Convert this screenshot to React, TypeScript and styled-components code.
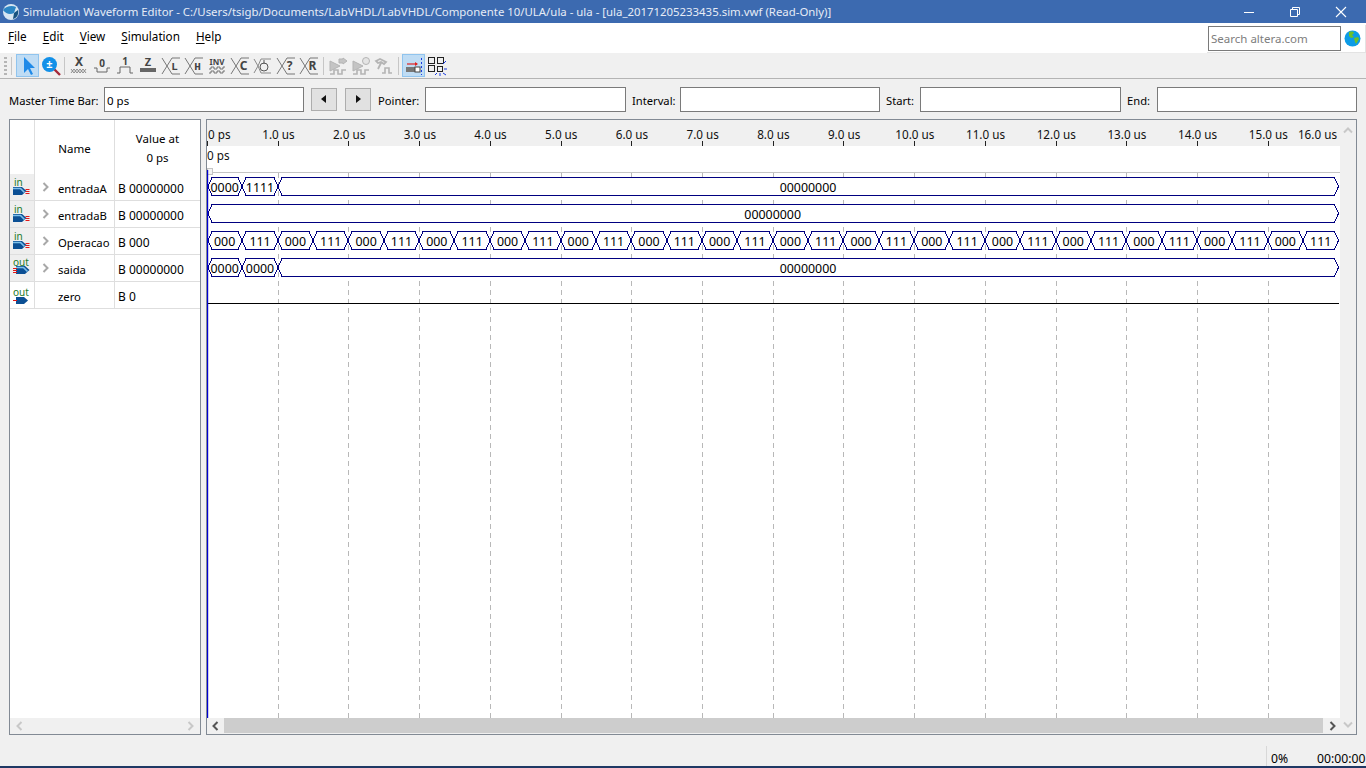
import React from "react";
import styled, { createGlobalStyle } from "styled-components";

const FONT = `"Noto Sans", "Open Sans", sans-serif`;
const NAVY = "#000080";

const GlobalStyle = createGlobalStyle`
  html, body {
    margin: 0;
    padding: 0;
    background: #f0f0f0;
    overflow: hidden;
  }
  body {
    font-family: ${FONT};
    font-size: 11.5px;
    color: #000;
  }
  * { box-sizing: border-box; }
`;

const Page = styled.div`
  width: 1366px;
  height: 768px;
  display: flex;
  flex-direction: column;
`;

/* title bar */
const TitleBar = styled.div`
  height: 23px;
  flex: none;
  background: #3c6ab0;
  display: flex;
  align-items: center;
  padding: 0 2px;
`;
const TitleText = styled.div`
  margin-left: 3px;
  color: #e6ecf6;
  font-size: 11.4px;
  flex: 1;
  white-space: nowrap;
`;
const WindowBtn = styled.div`
  width: 46px;
  height: 23px;
  display: flex;
  align-items: center;
  justify-content: center;
`;

/* menu */
const MenuBar = styled.div`
  height: 30px;
  flex: none;
  background: #fff;
  display: flex;
  align-items: center;
  padding-left: 8px;
  gap: 16px;
`;
const MenuItem = styled.span`
  font-size: 11.7px;
  margin-top: -5px;
  u { text-underline-offset: 2px; }
`;
const SearchArea = styled.div`
  margin-left: auto;
  height: 28px;
  width: 159px;
  margin-top: 2px;
  display: flex;
  align-items: center;
  gap: 3px;
  border-right: 1px solid #e3e3e3;
  border-bottom: 1px solid #e3e3e3;
  padding-left: 1px;
`;
const SearchBox = styled.div`
  width: 133px;
  height: 25px;
  border: 1px solid #7a7a7a;
  background: #fff;
  color: #7d7d7d;
  padding-left: 2px;
  line-height: 23px;
  font-size: 11.5px;
`;

/* toolbar */
const ToolBar = styled.div`
  height: 26px;
  flex: none;
  background: #f0f0f0;
  border-bottom: 1px solid #b4b4b4;
  display: flex;
  align-items: center;
  padding-left: 4px;
`;
const Grip = styled.div`
  width: 3px;
  height: 18px;
  background: repeating-linear-gradient(to bottom, #b5b5b5 0 2px, transparent 2px 4px);
`;
const ToolSep = styled.div<{ $gap?: number }>`
  width: 1px;
  height: 18px;
  flex: none;
  background: #c6c6c6;
  margin: 0 ${(p) => p.$gap ?? 2}px;
`;
const ToolBtn = styled.div<{ $active?: boolean }>`
  width: 23px;
  height: 23px;
  flex: none;
  display: flex;
  align-items: center;
  justify-content: center;
  background: ${(p) => (p.$active ? "#bfdcf4" : "transparent")};
  border: 1px solid ${(p) => (p.$active ? "#90c4ee" : "transparent")};
`;

/* time bar */
const TimeBar = styled.div`
  height: 40px;
  flex: none;
  display: flex;
  align-items: center;
  padding: 0 9px 0 9px;
  gap: 6px;
`;
const TimeLabel = styled.span<{ $w: number }>`
  width: ${(p) => p.$w}px;
  flex: none;
  white-space: nowrap;
  font-size: 11.2px;
  margin-top: 2px;
`;
const TimeInput = styled.div<{ $w: number }>`
  width: ${(p) => p.$w}px;
  height: 25px;
  flex: none;
  background: #fff;
  border: 1px solid #7a7a7a;
  padding-left: 2px;
  line-height: 25px;
  font-size: 11.5px;
`;
const StepBtn = styled.div<{ $left: number; $right?: number }>`
  width: 26px;
  height: 23px;
  flex: none;
  margin: 0 ${(p) => p.$right ?? 0}px 0 ${(p) => p.$left}px;
  background: #e1e1e1;
  border: 1px solid #adadad;
  display: flex;
  align-items: center;
  justify-content: center;
`;

/* panels */
const Main = styled.div`
  height: 616px;
  flex: none;
  display: grid;
  grid-template-columns: 192px 1151px;
  column-gap: 5px;
  padding-left: 9px;
`;
const Panel = styled.div`
  border: 1px solid #828a94;
  background: #fff;
  min-height: 0;
  display: flex;
  overflow: hidden;
`;
const NodeColumn = styled.div`
  flex: 1;
  display: flex;
  flex-direction: column;
`;
const HeaderRow = styled.div`
  height: 54px;
  flex: none;
  display: grid;
  grid-template-columns: 25px 80px 1fr;
`;
const HeaderCell = styled.div<{ $line?: boolean }>`
  border-right: ${(p) => (p.$line ? "1px solid #dedede" : "none")};
  display: flex;
  align-items: center;
  justify-content: center;
  flex-direction: column;
  line-height: 19px;
  padding-top: 2px;
  font-size: 11.5px;
`;
const NodeRow = styled.div`
  height: 27px;
  flex: none;
  display: grid;
  grid-template-columns: 25px 80px 1fr;
  border-bottom: 1px solid #dedede;
`;
const IconCell = styled.div<{ $shade: boolean }>`
  background: ${(p) => (p.$shade ? "#eeeeee" : "#fff")};
  border-right: 1px solid #dedede;
`;
const NameCell = styled.div`
  border-right: 1px solid #dedede;
  display: flex;
  align-items: center;
  padding-top: 2px;
  font-size: 11.3px;
`;
const Chevron = styled.div`
  width: 23px;
  flex: none;
  display: flex;
  justify-content: center;
  padding-right: 3px;
  margin-top: -3px;
`;
const ValueCell = styled.div`
  display: flex;
  align-items: center;
  padding: 2px 0 0 3px;
  font-size: 12px;
  white-space: nowrap;
`;
const Filler = styled.div`
  flex: 1;
`;
const HScroll = styled.div`
  height: 16px;
  flex: none;
  background: #f0f0f0;
  display: flex;
  align-items: center;
  justify-content: space-between;
  padding: 0 5px;
`;
const WaveColumn = styled.div`
  width: 1133px;
  flex: none;
  display: flex;
  flex-direction: column;
`;
const WaveChart = styled.svg`
  display: block;
  flex: none;
  font-family: ${FONT};
  font-size: 11.7px;
`;
const WaveLabel = styled.text`
  font-size: 12.4px;
  fill: #000;
`;
const WaveScroll = styled.div`
  height: 16px;
  flex: none;
  background: #f0f0f0;
  display: flex;
  align-items: center;
`;
const ArrowSlot = styled.div`
  width: 17px;
  flex: none;
  display: flex;
  justify-content: center;
`;
const Thumb = styled.div`
  flex: 1;
  height: 15px;
  margin-top: -1px;
  background: #cdcdcd;
`;
const VScroll = styled.div`
  flex: 1;
  background: #f0f0f0;
  display: flex;
  flex-direction: column;
  align-items: center;
  justify-content: space-between;
  padding: 6px 0 5px;
`;

/* status */
const StatusBar = styled.div`
  flex: 1;
  display: flex;
  align-items: flex-end;
  justify-content: flex-end;
`;
const StatusCell = styled.div<{ $w: number; $line?: boolean }>`
  width: ${(p) => p.$w}px;
  height: 20px;
  border-left: ${(p) => (p.$line ? "1px solid #d8d8d8" : "none")};
  padding: 4px 0 0 ${(p) => (p.$line ? 4 : 0)}px;
  font-size: 12.2px;
  white-space: nowrap;
`;
const BottomStrip = styled.div`
  height: 2px;
  flex: none;
  background: #1f3864;
`;

/* toolbar icons */
const D = "#b4b4b4";

const Svg: React.FC<{ children: React.ReactNode }> = ({ children }) => (
  <svg width={20} height={20} viewBox="0 0 20 20" style={{ display: "block", overflow: "visible" }}>
    {children}
  </svg>
);

const Letter: React.FC<{ x: number; y: number; s?: number; c?: string; mono?: boolean; children: React.ReactNode }> = ({
  x,
  y,
  s = 10,
  c = "#444",
  mono,
  children,
}) => (
  <text
    x={x}
    y={y}
    textAnchor="middle"
    fontSize={s}
    fontWeight={700}
    fontFamily={mono ? `"Liberation Mono", monospace` : FONT}
    fill={c}
  >
    {children}
  </text>
);

const BusLetter: React.FC<{ l: string; mono?: boolean }> = ({ l, mono }) => (
  <Svg>
    <path d="M1 2l5 8-5 8M6 10l5-8h8M6 10l5 8h8" fill="none" stroke="#777" strokeWidth={1} />
    <Letter x={13.5} y={14} s={mono ? 11 : 12} mono={mono}>
      {l}
    </Letter>
  </Svg>
);

const RunWave: React.FC<{ mark: React.ReactNode }> = ({ mark }) => (
  <Svg>
    <path d="M2 5l10 5-10 5z" fill="#c4c4c4" stroke={D} />
    <path d="M2 18h4v-4h4v4h4v-4h4" fill="none" stroke={D} strokeWidth={1.6} />
    {mark}
  </Svg>
);

const TOOL_ICONS: React.ReactNode[] = [
  <Svg>
    <path d="M6 1v16l4-4 3 6 2-1-3-6h5z" fill="#1f8ae8" />
  </Svg>,
  <Svg>
    <path d="M13 13l6 6" stroke="#a52a3a" strokeWidth={2.4} />
    <circle cx="8.5" cy="8.5" r="7.5" fill="#1290e8" />
    <text x="8.5" y="12" textAnchor="middle" fontSize={11} fontWeight={700} fill="#fff" fontFamily={FONT}>
      ±
    </text>
  </Svg>,
  <Svg>
    <Letter x={10} y={10} s={12}>
      X
    </Letter>
    <path d="M2 13l3 4 3-4 3 4 3-4 3 4M2 17l3-4 3 4 3-4 3 4 3-4" fill="none" stroke="#777" strokeWidth={0.8} />
  </Svg>,
  <Svg>
    <Letter x={10} y={11} s={10}>
      0
    </Letter>
    <path d="M2 12h3v4h10v-4h3" fill="none" stroke="#666" />
  </Svg>,
  <Svg>
    <Letter x={10} y={9} s={10}>
      1
    </Letter>
    <path d="M2 17h3v-6h10v6h3" fill="none" stroke="#666" />
  </Svg>,
  <Svg>
    <Letter x={10} y={10} s={11}>
      Z
    </Letter>
    <rect x="2" y="12" width="16" height="4" fill="#666" />
  </Svg>,
  <BusLetter l="L" mono />,
  <BusLetter l="H" mono />,
  <Svg>
    <Letter x={10} y={9} s={8}>
      INV
    </Letter>
    <path d="M2 13h2v-2h3v2h3v-2h3v2h3v-2h2M2 17h2v-2h3v2h3v-2h3v2h3v-2h2" fill="none" stroke="#666" strokeWidth={0.9} />
  </Svg>,
  <BusLetter l="C" />,
  <Svg>
    <path d="M1 3l4 7-4 7M5 10l3-7h10M5 10l3 7h10" fill="none" stroke="#8a8a8a" />
    <circle cx="11" cy="11" r="4" fill="#f0f0f0" stroke="#555" />
    <path d="M11 4v4" stroke="#555" />
  </Svg>,
  <BusLetter l="?" />,
  <BusLetter l="R" />,
  <RunWave mark={<path d="M11 3h4v-1l4 3-4 3v-1h-4z" fill="#c4c4c4" stroke={D} />} />,
  <RunWave mark={<circle cx="15" cy="5" r="3.5" fill="#e4e4e4" stroke={D} />} />,
  <Svg>
    <path d="M2 5l4-2 6 3-2 2-3-2-3 1zM7 7l-3 6" fill="none" stroke={D} strokeWidth={1.8} />
    <path d="M8 17h3v-5h4v5h3" fill="none" stroke={D} strokeWidth={1.6} />
  </Svg>,
];

const RulerIcon = () => (
  <Svg>
    <path d="M3 8h10" stroke="#e02020" strokeWidth={1.2} />
    <path d="M11 6l3 2-3 2z" fill="#e02020" />
    <rect x="2" y="11" width="9" height="5" fill="#777" />
    <rect x="11" y="11" width="5" height="5" fill="#fff" stroke="#444" />
    <path d="M17.5 2v17" stroke="#1a3ce0" strokeDasharray="2 2" />
  </Svg>
);

const GroupIcon = () => (
  <Svg>
    <g fill="none" stroke="#222">
      <rect x="1.5" y="1.5" width="6" height="6" />
      <rect x="10.5" y="1.5" width="6" height="6" />
      <rect x="1.5" y="9.5" width="6" height="6" />
      <rect x="10.5" y="10.5" width="5" height="5" />
    </g>
    <path d="M16 8l3-3M17 13h3M16 17l3 2M10 17l-2 2M13 17v3" stroke="#1a3ce0" />
  </Svg>
);

/* signal icons */
const SignalIcon: React.FC<{ dir: "in" | "out"; bus: boolean }> = ({ dir, bus }) => {
  const isIn = dir === "in";
  const bx = isIn ? 3 : 6;
  const by = isIn ? 13 : bus ? 11 : 15;
  const labelY = isIn ? 11.5 : bus ? 11 : 13.5;
  return (
    <svg width="24" height="26" viewBox="0 0 24 26" style={{ display: "block", overflow: "visible" }}>
      <text x={isIn ? 4 : 3} y={labelY} fontSize={10} fill="#1d7a2a" fontFamily={FONT}>
        {dir}
      </text>
      {bus ? (
        <>
          <path d={`M${bx} ${by}h9l4.5 4-4.5 4h-9z`} fill="#0b4f94" />
          <path d={`M${bx} ${by + 1.5}h7.5l4 4`} fill="none" stroke="#7cc0ea" strokeWidth={1.7} />
        </>
      ) : (
        <path d={`M${bx} ${by}h8l4 3.5-4 3.5h-8z`} fill="#0b4f94" />
      )}
      {isIn ? (
        <path d={`M15.5 ${by + 2.5}h4M15.5 ${by + 4.5}h4M15.5 ${by + 6.5}h4`} stroke="#e01818" />
      ) : (
        <path d={bus ? `M3 ${by + 2.5}h4M3 ${by + 4.5}h4M3 ${by + 6.5}h4` : `M3 ${by + 3.5}h4`} stroke="#e01818" />
      )}
    </svg>
  );
};

const Arrow: React.FC<{ dir: "left" | "right" | "up" | "down"; color: string }> = ({ dir, color }) => {
  const d = {
    left: "M6.5 1 2.5 5l4 4",
    right: "M3.5 1l4 4-4 4",
    up: "M1 6.5l4-4 4 4",
    down: "M1 3.5l4 4 4-4",
  }[dir];
  return (
    <svg width="10" height="10" viewBox="0 0 10 10" style={{ display: "block" }}>
      <path d={d} fill="none" stroke={color} strokeWidth={2} />
    </svg>
  );
};

/* data */
const US = 70.71;
const X0 = 207;
const xAt = (t: number) => X0 + t * US;
const END = 1339;

const NODES = [
  { name: "entradaA", value: "B 00000000", dir: "in", bus: true },
  { name: "entradaB", value: "B 00000000", dir: "in", bus: true },
  { name: "Operacao", value: "B 000", dir: "in", bus: true },
  { name: "saida", value: "B 00000000", dir: "out", bus: true },
  { name: "zero", value: "B 0", dir: "out", bus: false },
] as const;

type Seg = { from: number; to: number; label: string };

const operacao: Seg[] = Array.from({ length: 32 }, (_, i) => ({
  from: i * 0.5,
  to: (i + 1) * 0.5,
  label: i % 2 === 0 ? "000" : "111",
}));

const WAVES: { top: number; segs: Seg[] }[] = [
  {
    top: 177.5,
    segs: [
      { from: 0, to: 0.5, label: "0000" },
      { from: 0.5, to: 1, label: "1111" },
      { from: 1, to: 16, label: "00000000" },
    ],
  },
  { top: 204.5, segs: [{ from: 0, to: 16, label: "00000000" }] },
  { top: 231.5, segs: operacao },
  {
    top: 258.5,
    segs: [
      { from: 0, to: 0.5, label: "0000" },
      { from: 0.5, to: 1, label: "0000" },
      { from: 1, to: 16, label: "00000000" },
    ],
  },
];

const busPath = (from: number, to: number, top: number) => {
  const a = Math.round(xAt(from)) + (from === 0 ? 1 : 0);
  const b = to === 16 ? END - 0.5 : Math.round(xAt(to));
  const s = 4;
  const h = 18;
  return `M${a + s} ${top}H${b - s}L${b} ${top + h / 2}L${b - s} ${top + h}H${a + s}L${a} ${top + h / 2}Z`;
};

const rulerLabel = (t: number) => (t === 0 ? "0 ps" : `${t}.0 us`);

const App: React.FC = () => {
  const ticks = Array.from({ length: 16 }, (_, i) => i);
  return (
    <Page>
      <GlobalStyle />
      <TitleBar>
        <svg width="18" height="18" viewBox="0 0 18 18">
          <circle cx="9" cy="9" r="8" fill="#d8e6f2" />
          <path d="M1 7c3-4 9-5 13-3l-2 6c-4 2-8 1-11-3z" fill="#2d86c4" />
          <path d="M12 10l4-3c1 4-1 8-5 9z" fill="#17527f" />
        </svg>
        <TitleText>
          Simulation Waveform Editor - C:/Users/tsigb/Documents/LabVHDL/LabVHDL/Componente 10/ULA/ula - ula - [ula_20171205233435.sim.vwf (Read-Only)]
        </TitleText>
        <WindowBtn>
          <svg width="12" height="12" viewBox="0 0 12 12">
            <path d="M1 6.5h10" stroke="#fff" />
          </svg>
        </WindowBtn>
        <WindowBtn>
          <svg width="12" height="12" viewBox="0 0 12 12">
            <path d="M1.5 3.5h7v7h-7zM3.5 3V1.5h7v7H9" fill="none" stroke="#fff" />
          </svg>
        </WindowBtn>
        <WindowBtn>
          <svg width="12" height="12" viewBox="0 0 12 12">
            <path d="M1 1l10 10M11 1L1 11" stroke="#fff" strokeWidth={1.1} />
          </svg>
        </WindowBtn>
      </TitleBar>

      <MenuBar>
        <MenuItem>
          <u>F</u>ile
        </MenuItem>
        <MenuItem>
          <u>E</u>dit
        </MenuItem>
        <MenuItem>
          <u>V</u>iew
        </MenuItem>
        <MenuItem>
          <u>S</u>imulation
        </MenuItem>
        <MenuItem>
          <u>H</u>elp
        </MenuItem>
        <SearchArea>
          <SearchBox>Search altera.com</SearchBox>
          <svg width="17" height="17" viewBox="0 0 17 17">
            <circle cx="8.5" cy="8.5" r="8" fill="#0d9be6" />
            <path d="M5 2c3-1 5 0 5 1l-2 2 2 2-3 1-2-2zM10 8l4-1 1 2-3 5-1-2z" fill="#6cc02a" />
          </svg>
        </SearchArea>
      </MenuBar>

      <ToolBar>
        <Grip />
        <ToolSep $gap={4} />
        <ToolBtn $active>{TOOL_ICONS[0]}</ToolBtn>
        <ToolBtn>{TOOL_ICONS[1]}</ToolBtn>
        <ToolSep />
        {TOOL_ICONS.slice(2, 13).map((icon, i) => (
          <ToolBtn key={i}>{icon}</ToolBtn>
        ))}
        <ToolSep $gap={2.5} />
        {TOOL_ICONS.slice(13).map((icon, i) => (
          <ToolBtn key={i}>{icon}</ToolBtn>
        ))}
        <ToolSep $gap={3} />
        <ToolBtn $active>
          <RulerIcon />
        </ToolBtn>
        <ToolBtn>
          <GroupIcon />
        </ToolBtn>
      </ToolBar>

      <TimeBar>
        <TimeLabel $w={89}>Master Time Bar:</TimeLabel>
        <TimeInput $w={200}>0 ps</TimeInput>
        <StepBtn $left={1}>
          <svg width="8" height="10" viewBox="0 0 8 10">
            <path d="M6 1v8L1 5z" fill="#111" />
          </svg>
        </StepBtn>
        <StepBtn $left={2} $right={1}>
          <svg width="8" height="10" viewBox="0 0 8 10">
            <path d="M2 1v8l5-4z" fill="#111" />
          </svg>
        </StepBtn>
        <TimeLabel $w={41}>Pointer:</TimeLabel>
        <TimeInput $w={201} />
        <TimeLabel $w={42}>Interval:</TimeLabel>
        <TimeInput $w={200} />
        <TimeLabel $w={28}>Start:</TimeLabel>
        <TimeInput $w={201} />
        <TimeLabel $w={24}>End:</TimeLabel>
        <TimeInput $w={200} />
      </TimeBar>

      <Main>
        <Panel>
          <NodeColumn>
            <HeaderRow>
              <HeaderCell $line />
              <HeaderCell $line>Name</HeaderCell>
              <HeaderCell>
                <span>Value at</span>
                <span>0 ps</span>
              </HeaderCell>
            </HeaderRow>
            {NODES.map((n) => (
              <NodeRow key={n.name}>
                <IconCell $shade={n.bus}>
                  <SignalIcon dir={n.dir} bus={n.bus} />
                </IconCell>
                <NameCell>
                  <Chevron>{n.bus && <Arrow dir="right" color="#a8a8a8" />}</Chevron>
                  {n.name}
                </NameCell>
                <ValueCell>{n.value}</ValueCell>
              </NodeRow>
            ))}
            <Filler />
            <HScroll>
              <Arrow dir="left" color="#c8c8c8" />
              <Arrow dir="right" color="#c8c8c8" />
            </HScroll>
          </NodeColumn>
        </Panel>

        <Panel>
          <WaveColumn>
            <WaveChart width={1133} height={598} viewBox="207 120 1133 598">
              <rect x="207" y="120" width="1133" height="26" fill="#f0f0f0" />
              <path d="M207 172.5H1340" stroke="#c4c4c4" />
              {ticks.slice(1).map((t) => (
                <path
                  key={t}
                  d={`M${Math.round(xAt(t)) + 0.5} 173V718`}
                  stroke="#b8b8b8"
                  strokeDasharray="5 4"
                />
              ))}
              {ticks.map((t) => (
                <path key={t} d={`M${Math.round(xAt(t)) + 0.5} 141V146`} stroke="#222" />
              ))}
              {ticks.map((t) => (
                <text
                  key={t}
                  x={t === 0 ? 208 : xAt(t) + 0.7}
                  y={139}
                  textAnchor={t === 0 ? "start" : "middle"}
                  fill="#111"
                >
                  {rulerLabel(t)}
                </text>
              ))}
              <text x={1337} y={139} textAnchor="end" fill="#111">
                16.0 us
              </text>
              <text x={207} y={160} fill="#111">
                0 ps
              </text>
              <rect x="207.5" y="168.5" width="5" height="6" fill="#f4f4f4" stroke="#c4c4c4" />
              {WAVES.map((w) =>
                w.segs.map((s, i) => (
                  <g key={`${w.top}-${i}`}>
                    <path d={busPath(s.from, s.to, w.top)} fill="#fff" stroke={NAVY} shapeRendering="crispEdges" />
                    <WaveLabel
                      x={(xAt(s.from) + Math.min(xAt(s.to), END)) / 2}
                      y={w.top + 14.5}
                      textAnchor="middle"
                    >
                      {s.label}
                    </WaveLabel>
                  </g>
                ))
              )}
              <path d="M207 303.5H1339" stroke="#000" />
              <path d="M207.5 170V718" stroke="#0000d0" strokeWidth={1.4} />
            </WaveChart>
            <WaveScroll>
              <ArrowSlot>
                <Arrow dir="left" color="#555" />
              </ArrowSlot>
              <Thumb />
              <ArrowSlot>
                <Arrow dir="right" color="#555" />
              </ArrowSlot>
            </WaveScroll>
          </WaveColumn>
          <VScroll>
            <Arrow dir="up" color="#c8c8c8" />
            <Arrow dir="down" color="#c8c8c8" />
          </VScroll>
        </Panel>
      </Main>

      <StatusBar>
        <StatusCell $w={51} $line>
          0%
        </StatusCell>
        <StatusCell $w={49}>00:00:00</StatusCell>
      </StatusBar>
      <BottomStrip />
    </Page>
  );
};

export default App;
